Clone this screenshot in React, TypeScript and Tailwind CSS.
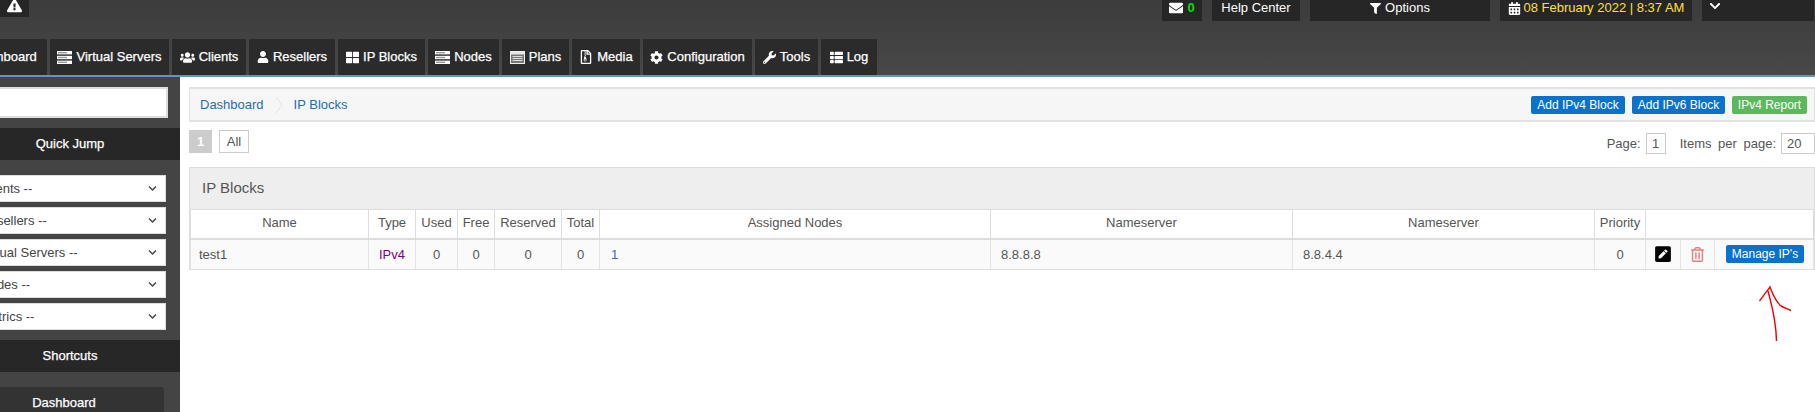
import { FaExclamationTriangle, FaUsers, FaUser, FaThLarge, FaRegFileArchive, FaCog, FaWrench, FaThList, FaEnvelope, FaFilter, FaCalendarAlt, FaChevronDown, FaPenSquare, FaRegTrashAlt, FaTachometerAlt } from "react-icons/fa";
import type { ReactNode } from "react";

function ServerIcon() {
  return (
    <svg width="15" height="13" viewBox="0 0 15 13" aria-hidden="true">
      <rect x="0" y="0" width="15" height="3.4" fill="#fff" />
      <rect x="0" y="4.8" width="15" height="3.4" fill="#fff" />
      <rect x="0" y="9.6" width="15" height="3.4" fill="#fff" />
      <rect x="1" y="1" width="9" height="1.4" fill="#999" />
      <rect x="1" y="5.8" width="9" height="1.4" fill="#999" />
      <rect x="1" y="10.6" width="9" height="1.4" fill="#999" />
    </svg>
  );
}

function PlansIcon() {
  return (
    <svg width="15" height="13" viewBox="0 0 15 13" aria-hidden="true">
      <rect x="0.5" y="0.5" width="14" height="12" fill="#777" stroke="#eee" />
      <rect x="1" y="1" width="13" height="2.5" fill="#e8e8e8" />
      <path d="M2.5 5.5h10M2.5 7.5h10M2.5 9.5h10" stroke="#ddd" />
    </svg>
  );
}

const tabs: { label: string; icon: ReactNode; w: string }[] = [
  { label: "Dashboard", icon: <FaTachometerAlt size={13} />, w: "w-[109px] ml-[-62px] pl-[8px]" },
  { label: "Virtual Servers", icon: <ServerIcon />, w: "w-[119px]" },
  { label: "Clients", icon: <FaUsers size={15} />, w: "w-[74px]" },
  { label: "Resellers", icon: <FaUser size={12} />, w: "w-[86px]" },
  { label: "IP Blocks", icon: <FaThLarge size={13} />, w: "w-[87px]" },
  { label: "Nodes", icon: <ServerIcon />, w: "w-[71px]" },
  { label: "Plans", icon: <PlansIcon />, w: "w-[67px]" },
  { label: "Media", icon: <FaRegFileArchive size={14} />, w: "w-[68px]" },
  { label: "Configuration", icon: <FaCog size={13} />, w: "w-[109px]" },
  { label: "Tools", icon: <FaWrench size={13} />, w: "w-[63px]" },
  { label: "Log", icon: <FaThList size={13} />, w: "w-[56px]" },
];

const selects = ["-- Clients --", "-- Resellers --", "-- Virtual Servers --", "-- Nodes --", "-- Metrics --"];

const cols = [
  "w-[178px]", "w-[47px]", "w-[42px]", "w-[37px]", "w-[67px]", "w-[38px]", "w-[391px]", "w-[302px]", "w-[302px]", "w-[51px]", "w-[35px]", "w-[34px]", "w-[99px]",
];

const th = "border border-[#ddd] border-b-2 font-normal text-center p-0 pb-[2px] h-[29px]";
const td = "border border-[#e4e4e4] border-b-[#ddd] text-center p-0 h-[31px]";

function SideHeader({ children }: { children: ReactNode }) {
  return <div className="h-[32px] bg-[#272727] text-white flex items-center justify-center [-webkit-text-stroke:0.25px_white]">{children}</div>;
}

function ActionBtn({ children, color, w }: { children: ReactNode; color: string; w: string }) {
  return <div className={`${color} ${w} h-[18px] rounded-[2px] text-white text-[12px] flex items-center justify-center`}>{children}</div>;
}

export default function App() {
  return (
    <div className="relative w-[1815px] h-[412px] overflow-hidden bg-white text-[13px] text-[#555] font-['Liberation_Sans',Arial,sans-serif]">
      <header className="h-[75px] bg-gradient-to-b from-[#3c3c3c] to-[#484848] flex flex-col">
        <div className="h-[39px] flex items-start">
          <div className="w-[29px] h-[17px] bg-[#262626] text-white flex items-start justify-center">
            <FaExclamationTriangle size={15} className="-mt-[2px]" />
          </div>
          <div className="ml-[1133px] flex gap-[10px] text-white">
            <div className="w-[40px] h-[21px] bg-[#262626] flex items-center justify-center gap-[4px] pb-[5px]">
              <FaEnvelope size={14} />
              <span className="text-[#00e000] font-bold">0</span>
            </div>
            <div className="w-[88px] h-[21px] bg-[#262626] flex items-center justify-center pb-[5px]">Help Center</div>
            <div className="w-[180px] h-[21px] bg-[#262626] flex items-center justify-center gap-[4px] pb-[5px]">
              <FaFilter size={11} />
              <span>Options</span>
            </div>
            <div className="w-[192px] h-[21px] bg-[#262626] flex items-center justify-center gap-[3px] pb-[5px]">
              <FaCalendarAlt size={13} />
              <span className="text-[#ffe030]">08 February 2022 | 8:37 AM</span>
            </div>
            <div className="w-[112px] h-[21px] bg-[#262626] flex items-start pl-[7px]">
              <FaChevronDown size={12} />
            </div>
          </div>
        </div>
        <nav className="h-[36px] flex gap-[3px] text-white">
          {tabs.map((t) => (
            <div key={t.label} className={`${t.w} shrink-0 bg-[#2b2b2b] flex items-center justify-center gap-[4px] [-webkit-text-stroke:0.25px_white]`}>
              {t.icon}
              <span>{t.label}</span>
            </div>
          ))}
        </nav>
      </header>
      <div className="h-[2px] bg-[#6a8fc0]" />
      <div className="flex h-[335px]">
        <aside className="w-[180px] shrink-0 bg-[#444] overflow-hidden flex flex-col">
          <div className="pt-[10px] pr-[12px] pb-[10px] ml-[-4px]">
            <div className="h-[31px] bg-white border-2 border-[#ddd]" />
          </div>
          <div className="ml-[-40px] w-[220px]">
            <SideHeader>Quick Jump</SideHeader>
            <div className="pt-[15px] pb-[10px] pl-[6px] pr-[14px] flex flex-col gap-[5px]">
              {selects.map((s) => (
                <div key={s} className="h-[27px] bg-white border border-[#ddd] flex items-center justify-between pl-[1px] pr-[8px] text-[#444]">
                  <span>{s}</span>
                  <FaChevronDown size={9} className="text-[#444]" />
                </div>
              ))}
            </div>
            <SideHeader>Shortcuts</SideHeader>
            <div className="pt-[15px] pl-[4px] pr-[16px]">
              <div className="h-[31px] bg-[#333] rounded-t-[3px] text-white flex items-center justify-center [-webkit-text-stroke:0.25px_white]">Dashboard</div>
            </div>
          </div>
        </aside>
        <main className="flex-1 pl-[9px] pr-[1px] pt-[10px]">
          <div className="h-[35px] bg-[#f6f6f6] border-2 border-[#e2e2e2] border-x flex items-center justify-between pl-[10px] pr-[7px]">
            <div className="flex items-center text-[#1f6eae]">
              <span>Dashboard</span>
              <svg width="8" height="18" viewBox="0 0 8 18" className="mx-[11px]" fill="none">
                <path d="M1 1l6 8-6 8" stroke="#e3e3e3" strokeWidth="1" />
              </svg>
              <span>IP Blocks</span>
            </div>
            <div className="flex gap-[7px]">
              <ActionBtn color="bg-[#0b72cc]" w="w-[94px]">Add IPv4 Block</ActionBtn>
              <ActionBtn color="bg-[#0b72cc]" w="w-[93px]">Add IPv6 Block</ActionBtn>
              <ActionBtn color="bg-[#5cb85c]" w="w-[75px]">IPv4 Report</ActionBtn>
            </div>
          </div>
          <div className="h-[45px] flex justify-between pt-[8px]">
            <div className="flex gap-[7px] h-[23px]">
              <div className="w-[23px] bg-[#ccc] text-white flex items-center justify-center font-bold">1</div>
              <div className="w-[30px] border border-[#ccc] flex items-center justify-center">All</div>
            </div>
            <div className="flex items-center h-[21px] mt-[3px] [word-spacing:3px]">
              <span>Page:</span>
              <div className="w-[20px] h-[21px] border border-[#ccc] flex items-center justify-center ml-[5px] mr-[14px]">1</div>
              <span>Items per page:</span>
              <div className="w-[34px] h-[21px] border border-[#ccc] flex items-center pl-[5px] ml-[5px]">20</div>
            </div>
          </div>
          <section className="border-t border-x border-[#ddd]">
            <div className="h-[41px] bg-[#eee] flex items-center pl-[12px] text-[15px]">IP Blocks</div>
            <table className="w-full table-fixed border-collapse">
              <colgroup>
                {cols.map((c, i) => <col key={i} className={c} />)}
              </colgroup>
              <thead>
                <tr>
                  <th className={th}>Name</th>
                  <th className={th}>Type</th>
                  <th className={th}>Used</th>
                  <th className={th}>Free</th>
                  <th className={th}>Reserved</th>
                  <th className={th}>Total</th>
                  <th className={th}>Assigned Nodes</th>
                  <th className={th}>Nameserver</th>
                  <th className={th}>Nameserver</th>
                  <th className={th}>Priority</th>
                  <th className={th} colSpan={3}></th>
                </tr>
              </thead>
              <tbody className="bg-[#fafafa]">
                <tr>
                  <td className={`${td} text-left pl-[8px]`}>test1</td>
                  <td className={`${td} text-[#800080]`}>IPv4</td>
                  <td className={td}>0</td>
                  <td className={td}>0</td>
                  <td className={td}>0</td>
                  <td className={td}>0</td>
                  <td className={`${td} text-left pl-[11px] text-[#3d5fc4]`}>1</td>
                  <td className={`${td} text-left pl-[10px]`}>8.8.8.8</td>
                  <td className={`${td} text-left pl-[10px]`}>8.8.4.4</td>
                  <td className={td}>0</td>
                  <td className={td}>
                    <div className="flex justify-center"><FaPenSquare size={18} className="text-black" /></div>
                  </td>
                  <td className={td}>
                    <div className="flex justify-center"><FaRegTrashAlt size={15} className="text-[#e58080]" /></div>
                  </td>
                  <td className={td}>
                    <div className="flex justify-center pl-[2px]">
                      <ActionBtn color="bg-[#0b72cc]" w="w-[78px]">Manage IP's</ActionBtn>
                    </div>
                  </td>
                </tr>
              </tbody>
            </table>
          </section>
        </main>
      </div>
      <svg className="absolute left-[1755px] top-[282px]" width="40" height="62" viewBox="1755 282 40 62" fill="none" stroke="#f00000" strokeWidth="1.4" aria-hidden="true">
        <path d="M1759.5 301 C1763 296 1767 291 1770 287 C1773 295 1776 302 1781 306 C1785 308 1788 309 1791 310.5" />
        <path d="M1768 291 C1771 303 1776 318 1776.5 341" />
      </svg>
    </div>
  );
}
